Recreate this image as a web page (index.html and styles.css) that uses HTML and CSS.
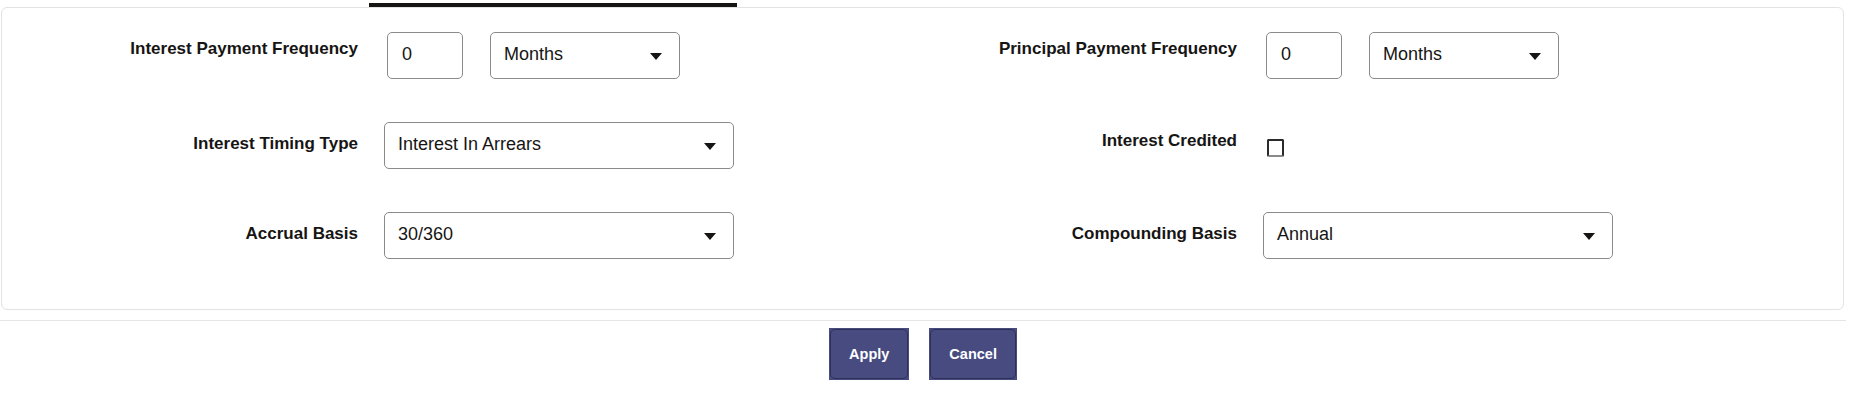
FILE: index.html
```html
<!DOCTYPE html>
<html lang="en">
<head>
<meta charset="utf-8">
<title>Interest Settings</title>
<link rel="stylesheet" href="styles.css">
</head>
<body>
<div class="page">
  <div class="tabbar"><div class="tab-indicator"></div></div>
  <div class="panel">
    <div class="form-grid">
      <div class="lbl lbl-top">Interest Payment Frequency</div>
      <div class="ctl">
        <div class="field num">0</div>
        <div class="field select unit"><span class="val">Months</span><span class="caret"></span></div>
      </div>
      <div class="lbl lbl-top">Principal Payment Frequency</div>
      <div class="ctl">
        <div class="field num">0</div>
        <div class="field select unit"><span class="val">Months</span><span class="caret"></span></div>
      </div>

      <div class="lbl">Interest Timing Type</div>
      <div class="ctl">
        <div class="field select wide"><span class="val">Interest In Arrears</span><span class="caret"></span></div>
      </div>
      <div class="lbl lbl-check">Interest Credited</div>
      <div class="ctl">
        <div class="checkbox"></div>
      </div>

      <div class="lbl">Accrual Basis</div>
      <div class="ctl">
        <div class="field select wide"><span class="val">30/360</span><span class="caret"></span></div>
      </div>
      <div class="lbl">Compounding Basis</div>
      <div class="ctl">
        <div class="field select wide"><span class="val">Annual</span><span class="caret"></span></div>
      </div>
    </div>
  </div>
  <div class="footer">
    <button class="btn"><span class="btn-inner">Apply</span></button>
    <button class="btn"><span class="btn-inner">Cancel</span></button>
  </div>
</div>
</body>
</html>
```

FILE: styles.css
```css
html, body {
  margin: 0;
  padding: 0;
  background: #ffffff;
}

body {
  font-family: "Liberation Sans", Arial, sans-serif;
  color: #161513;
}

.page {
  padding-top: 3px;
  width: 1852px;
}

.tabbar {
  height: 4px;
  padding-left: 369px;
}

.tab-indicator {
  width: 368px;
  height: 4px;
  background: #161513;
}

.panel {
  margin-left: 1px;
  width: 1841px;
  border: 1px solid #e3e3e3;
  border-radius: 6px;
  padding: 24px 0 50px 0;
}

.form-grid {
  display: grid;
  grid-template-columns: 382px 556px 323px 1fr;
  grid-auto-rows: 47px;
  row-gap: 43px;
  align-items: start;
}

.lbl {
  font-size: 17px;
  font-weight: bold;
  line-height: 20px;
  text-align: right;
  white-space: nowrap;
  padding-right: 26px;
  padding-top: 12px;
}

.lbl-top {
  padding-top: 7px;
}

.lbl-check {
  padding-top: 9px;
}

.ctl {
  display: flex;
  align-items: flex-start;
  gap: 27px;
}

.field {
  box-sizing: border-box;
  height: 47px;
  border: 1px solid #8b8a89;
  border-radius: 5px;
  display: flex;
  align-items: center;
  font-size: 18px;
  line-height: 22px;
  padding: 0 0 4px 14px;
  background: #ffffff;
}

.num {
  width: 76px;
  margin-left: 3px;
}

.select {
  justify-content: space-between;
  padding-left: 13px;
  padding-right: 17px;
}

.unit {
  width: 190px;
}

.wide {
  width: 350px;
}

.caret {
  width: 0;
  height: 0;
  border-left: 6px solid transparent;
  border-right: 6px solid transparent;
  border-top: 7px solid #161513;
  margin-top: 5px;
}

.checkbox {
  box-sizing: border-box;
  width: 17px;
  height: 18px;
  margin: 17px 0 0 4px;
  border: 2px solid #2a2a2a;
  border-bottom-color: #8a8a8a;
  border-radius: 2px;
  background: #ffffff;
}

.footer {
  margin-top: 10px;
  width: 1846px;
  border-top: 1px solid #e6e6e6;
  padding-top: 7px;
  display: flex;
  justify-content: center;
  gap: 20px;
}

.btn {
  height: 52px;
  padding: 1px;
  margin: 0;
  border: none;
  background: #474b7f;
  color: #ffffff;
  font-family: "Liberation Sans", Arial, sans-serif;
  font-size: 14.5px;
  font-weight: bold;
  cursor: pointer;
}

.btn-inner {
  box-sizing: border-box;
  height: 50px;
  display: flex;
  align-items: center;
  padding: 0 18px;
  border: 1px solid #2e3157;
  border-radius: 5px;
}
```
